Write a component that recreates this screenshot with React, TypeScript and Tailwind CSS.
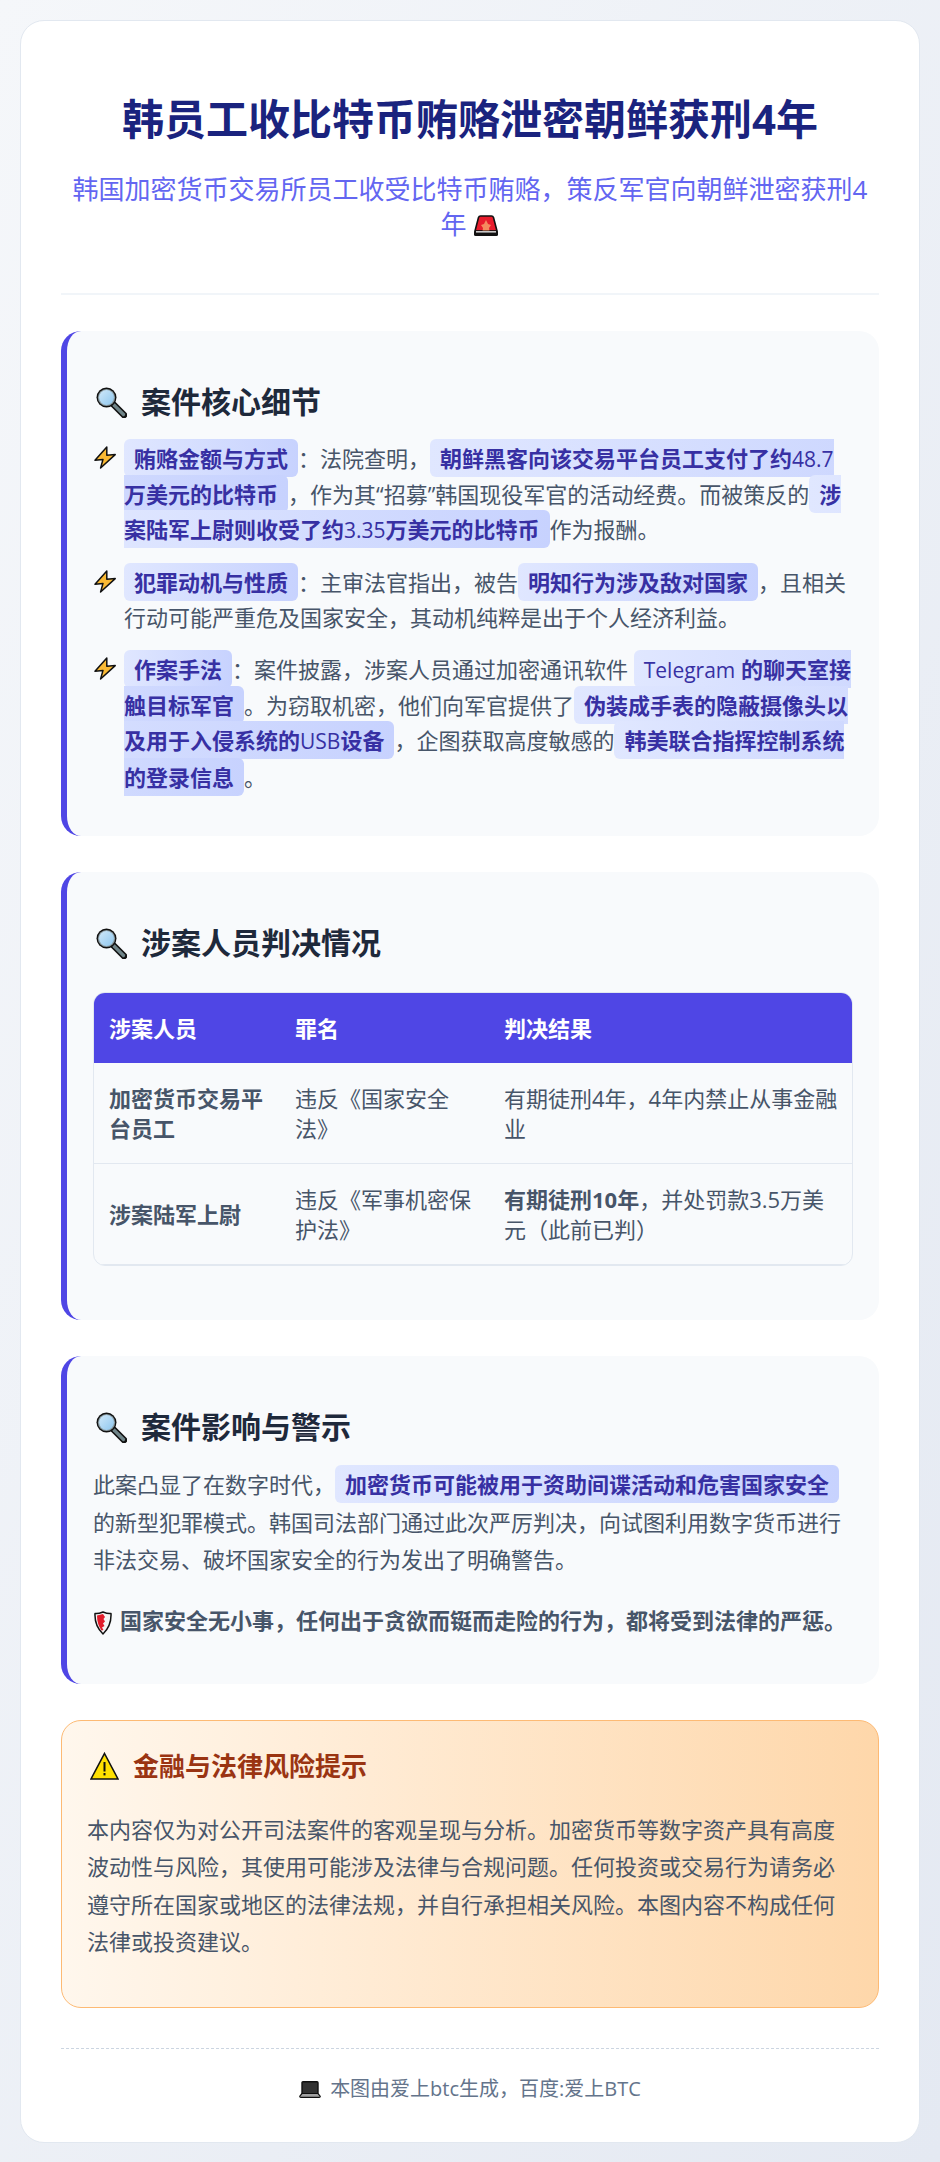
import React from "react";

function Chip({ children }: { children: React.ReactNode }) {
  return (
    <strong className="bg-gradient-to-r from-[#e0e7ff] to-[#c7d2fe] text-[#3730a3] font-bold px-[10px] py-[4px] rounded-[6px]">
      {children}
    </strong>
  );
}

function Latin({ children }: { children: React.ReactNode }) {
  return <span className="font-normal text-[21px]">{children}</span>;
}

function Magnifier() {
  return (
    <svg viewBox="0 0 32 32" className="w-[32px] h-[32px] shrink-0 ml-[2px]">
      <defs>
        <linearGradient id="lens" x1="0" y1="0" x2="1" y2="1">
          <stop offset="0" stopColor="#cfe8fa" />
          <stop offset="1" stopColor="#8fc7ee" />
        </linearGradient>
      </defs>
      <line x1="18" y1="18" x2="29" y2="29" stroke="#111" strokeWidth="6.5" strokeLinecap="round" />
      <line x1="19" y1="19" x2="28.5" y2="28.5" stroke="#6f8488" strokeWidth="3.2" strokeLinecap="round" />
      <circle cx="11.5" cy="11.5" r="10" fill="#111" />
      <circle cx="11.5" cy="11.5" r="8.6" fill="#8a9aa0" />
      <circle cx="11.5" cy="11.5" r="7.4" fill="url(#lens)" />
    </svg>
  );
}

function Bolt() {
  return (
    <svg viewBox="0 0 22 23" className="w-[22px] h-[23px] shrink-0 mt-[5px] ml-[1px] mr-[8px]">
      <path
        d="M12.8 1 L1 14.2 L9 13.4 L6.6 22 L21.2 8.6 L12.8 9.2 Z"
        fill="#f9b934"
        stroke="#111"
        strokeWidth="1.5"
        strokeLinejoin="round"
      />
    </svg>
  );
}

function Siren() {
  return (
    <svg viewBox="0 0 26 22" className="inline-block w-[26px] h-[22px] align-[-3px]">
      <path d="M7.5 1 H18.5 Q20 1 20.5 2.5 L24 16 H2 L5.5 2.5 Q6 1 7.5 1 Z" fill="#e81c2c" stroke="#111" strokeWidth="1.6" />
      <path d="M13 5 L15 9 L18 10 L16 13 L16.5 16 H9.5 L10 13 L8 10 L11 9 Z" fill="#f58a5e" />
      <rect x="1" y="15.5" width="24" height="5.5" rx="1.5" fill="#111" />
      <rect x="3" y="16" width="20" height="1.6" fill="#c9c9c9" />
    </svg>
  );
}

function Shield() {
  return (
    <svg viewBox="0 0 18 24" className="inline-block w-[18px] h-[24px] align-[-6px] ml-[1px] mr-[8px]">
      <path d="M9 1 Q14 3 17 2.5 Q17.6 15 9 23 Q0.4 15 1 2.5 Q4 3 9 1 Z" fill="#f4f4f4" stroke="#111" strokeWidth="1.5" strokeLinejoin="round" />
      <path d="M9 3 L3 4.4 Q3 13 7.5 19.5 L9.5 19 L8 16.5 L10.5 15 L9 12.5 L11 10.5 L9.5 8 L11 6 Z" fill="#e21b2a" />
    </svg>
  );
}

function Warn() {
  return (
    <svg viewBox="0 0 29 28" className="w-[29px] h-[28px] shrink-0 ml-[3px]">
      <path d="M14.5 1.5 L28 27 H1 Z" fill="#ffe000" stroke="#111" strokeWidth="1.6" strokeLinejoin="miter" />
      <rect x="13.5" y="10" width="2" height="9.5" fill="#111" />
      <rect x="13.5" y="21" width="2" height="2.4" fill="#111" />
    </svg>
  );
}

function Laptop() {
  return (
    <svg viewBox="0 0 22 17" className="inline-block w-[22px] h-[17px] align-[-2px] mr-[9px]">
      <rect x="3" y="0.8" width="16" height="12" rx="1" fill="#333" stroke="#111" strokeWidth="1.4" />
      <path d="M3 12.5 L0.8 15.2 Q0.6 16.4 2 16.4 H20 Q21.4 16.4 21.2 15.2 L19 12.5 Z" fill="#a3a3a3" stroke="#111" strokeWidth="1.2" />
    </svg>
  );
}

function Heading({ children }: { children: React.ReactNode }) {
  return (
    <h2 className="flex items-center gap-[14px] text-[30px] leading-[42px] font-bold text-[#1e293b] mt-[24px] mb-[18px]">
      <Magnifier />
      <span>{children}</span>
    </h2>
  );
}

function Item({ children }: { children: React.ReactNode }) {
  return (
    <li className="flex mb-[16.5px] text-[22px] leading-[35.2px]">
      <Bolt />
      <div className="flex-1 min-w-0">{children}</div>
    </li>
  );
}

const rows = [
  {
    a: "加密货币交易平台员工",
    b: "违反《国家安全法》",
    c: <>有期徒刑4年，4年内禁止从事金融业</>,
  },
  {
    a: "涉案陆军上尉",
    b: "违反《军事机密保护法》",
    c: (
      <>
        <strong className="font-bold">有期徒刑10年</strong>，并处罚款3.5万美元（此前已判）
      </>
    ),
  },
];

export default function App() {
  return (
    <div
      className="min-h-screen bg-gradient-to-br from-[#f5f7fa] to-[#e4e9f2] p-[20px] text-[#475569]"
      style={{ fontFamily: '"Open Sans", "Noto Sans CJK SC", sans-serif' }}
    >
      <div className="bg-white border border-[#e2e8f0] rounded-[24px] p-[40px]">
        <header className="text-center border-b-2 border-[#f1f5f9] pb-[51px] mb-[36px]">
          <h1 className="text-[42px] leading-[56px] font-bold text-[#1a237e] mt-[30px] mb-[25px]">
            韩员工收比特币贿赂泄密朝鲜获刑4年
          </h1>
          <p className="text-[26px] leading-[35px] text-[#6366f1]">
            韩国加密货币交易所员工收受比特币贿赂，策反军官向朝鲜泄密获刑4年 <Siren />
          </p>
        </header>

        <section className="bg-[#f8fafc] border-l-[6px] border-[#4f46e5] rounded-[20px] p-[26px] pb-[25px] mb-[36px]">
          <Heading>案件核心细节</Heading>
          <ul>
            <Item>
              <Chip>贿赂金额与方式</Chip>：法院查明，<Chip>朝鲜黑客向该交易平台员工支付了约<Latin>48.7</Latin>万美元的比特币</Chip>，作为其“招募”韩国现役军官的活动经费。而被策反的<Chip>涉案陆军上尉则收受了约<Latin>3.35</Latin>万美元的比特币</Chip>作为报酬。
            </Item>
            <Item>
              <Chip>犯罪动机与性质</Chip>：主审法官指出，被告<Chip>明知行为涉及敌对国家</Chip>，且相关行动可能严重危及国家安全，其动机纯粹是出于个人经济利益。
            </Item>
            <Item>
              <Chip>作案手法</Chip>：案件披露，涉案人员通过加密通讯软件 <Chip><Latin>Telegram</Latin> 的聊天室接触目标军官</Chip>。为窃取机密，他们向军官提供了<Chip>伪装成手表的隐蔽摄像头以及用于入侵系统的<Latin>USB</Latin>设备</Chip>，企图获取高度敏感的<Chip>韩美联合指挥控制系统的登录信息</Chip>。
            </Item>
          </ul>
        </section>

        <section className="bg-[#f8fafc] border-l-[6px] border-[#4f46e5] rounded-[20px] p-[26px] pb-[54px] mb-[36px]">
          <Heading>涉案人员判决情况</Heading>
          <div className="mt-[28px] border border-[#e2e8f0] rounded-[12px] overflow-hidden">
            <table className="w-full border-collapse text-[22px] leading-[30px] table-fixed">
              <thead>
                <tr className="bg-[#4f46e5] text-white text-left">
                  <th className="w-[186px] px-[15px] py-[20px] font-bold">涉案人员</th>
                  <th className="w-[209px] px-[15px] py-[20px] font-bold">罪名</th>
                  <th className="px-[15px] py-[20px] font-bold">判决结果</th>
                </tr>
              </thead>
              <tbody>
                {rows.map((r, i) => (
                  <tr key={i} className="border-b border-[#e2e8f0]">
                    <td className="px-[15px] py-[20px] font-bold">{r.a}</td>
                    <td className="px-[15px] py-[20px]">{r.b}</td>
                    <td className="pl-[15px] pr-[12px] py-[20px]">{r.c}</td>
                  </tr>
                ))}
              </tbody>
            </table>
          </div>
        </section>

        <section className="bg-[#f8fafc] border-l-[6px] border-[#4f46e5] rounded-[20px] p-[26px] pb-[45px] mb-[36px]">
          <Heading>案件影响与警示</Heading>
          <p className="text-[22px] leading-[37.4px]">
            此案凸显了在数字时代，<Chip>加密货币可能被用于资助间谍活动和危害国家安全</Chip>的新型犯罪模式。韩国司法部门通过此次严厉判决，向试图利用数字货币进行非法交易、破坏国家安全的行为发出了明确警告。
          </p>
          <p className="text-[22px] leading-[37.4px] mt-[23px] font-bold">
            <Shield />
            国家安全无小事，任何出于贪欲而铤而走险的行为，都将受到法律的严惩。
          </p>
        </section>

        <section className="bg-gradient-to-r from-[#fff7ed] to-[#fed7aa] border border-[#fdba74] rounded-[20px] px-[25px] pt-[27px] pb-[46px]">
          <h3 className="flex items-center gap-[14px] text-[26px] leading-[36px] font-bold text-[#9a3412] mb-[27px]">
            <Warn />
            <span>金融与法律风险提示</span>
          </h3>
          <p className="text-[22px] leading-[37.4px]">
            本内容仅为对公开司法案件的客观呈现与分析。加密货币等数字资产具有高度波动性与风险，其使用可能涉及法律与合规问题。任何投资或交易行为请务必遵守所在国家或地区的法律法规，并自行承担相关风险。本图内容不构成任何法律或投资建议。
          </p>
        </section>

        <footer className="mt-[40px] border-t border-dashed border-[#cbd5e1] pt-[26px] text-center text-[20px] leading-[27px] text-[#64748b]">
          <Laptop />
          本图由爱上btc生成，百度:爱上BTC
        </footer>
      </div>
    </div>
  );
}
